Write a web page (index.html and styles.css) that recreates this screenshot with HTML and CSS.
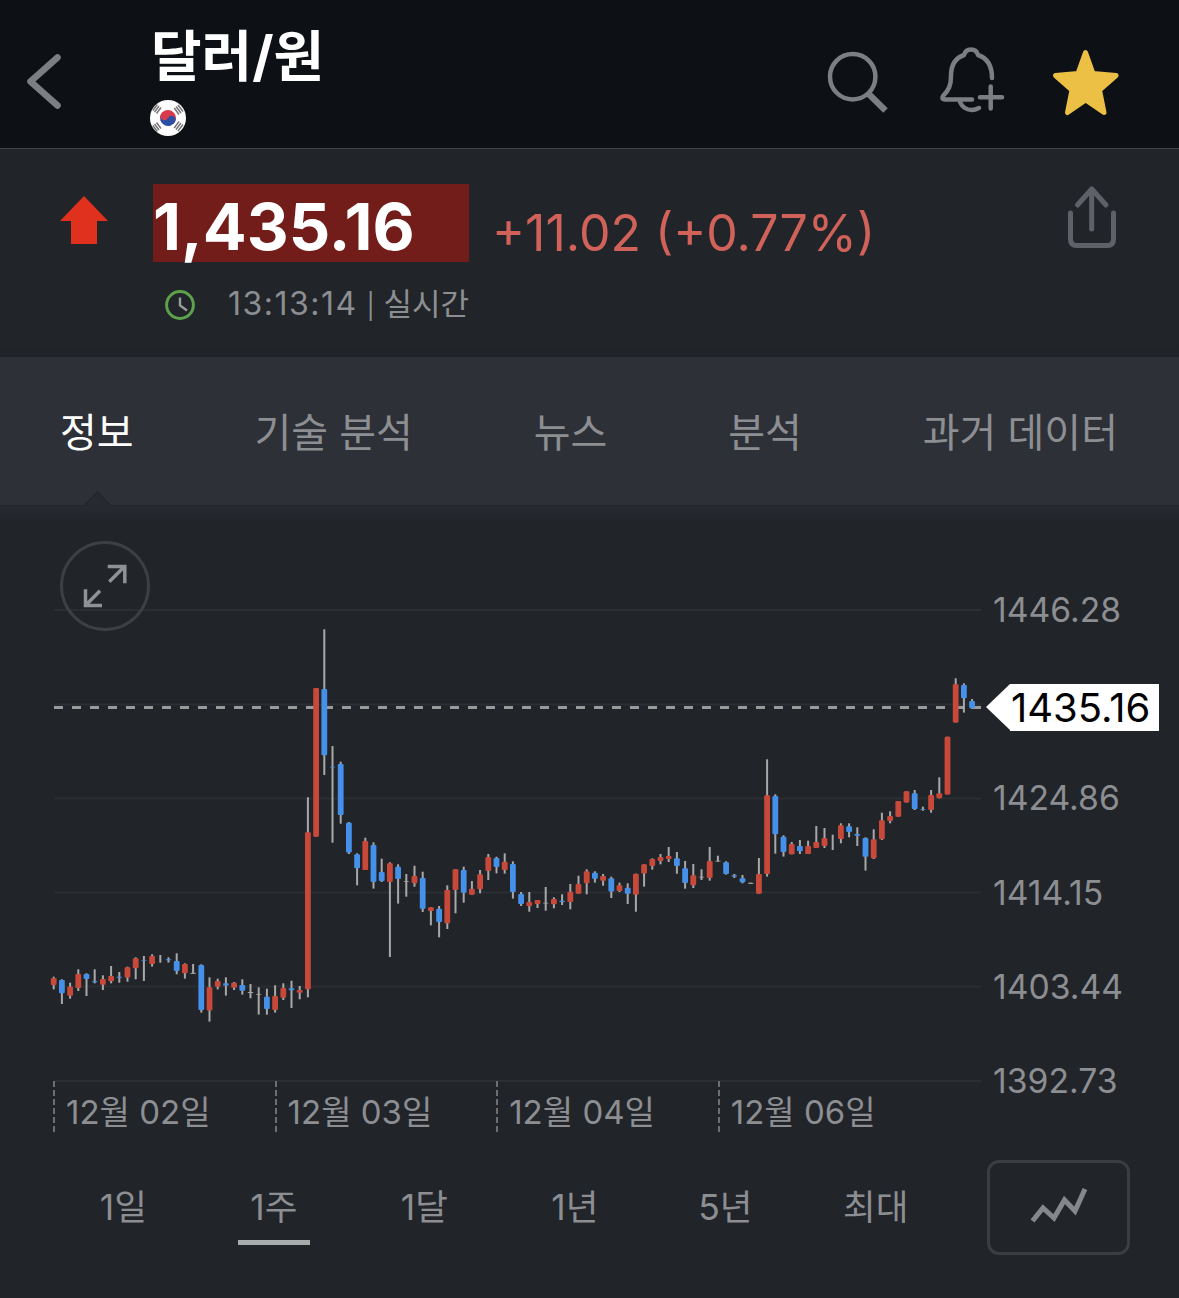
FILE: index.html
```html
<!DOCTYPE html>
<html lang="ko">
<head>
    <meta charset="UTF-8">
    <title>달러/원</title>
    <link rel="stylesheet" href="styles.css">
</head>
<body>
    <header class="top-bar">
        <svg class="back-icon" viewBox="25 50 38 64">
            <path d="M57.500 57.500 30.500 81.500 57.500 105.500" class="icon-line thick"/>
        </svg>
        <div class="title-block">
            <h1>달러/원</h1>
            <svg class="flag" viewBox="0 0 36 36">
                <circle cx="18" cy="18" r="18" fill="#fff"/>
                <g transform="rotate(28 18 18)">
                    <path d="M10 18a8 8 0 0 1 16 0z" fill="#d93a4b"/>
                    <path d="M10 18a8 8 0 0 0 16 0z" fill="#2c4fa3"/>
                    <circle cx="14" cy="18" r="4" fill="#d93a4b"/>
                    <circle cx="22" cy="18" r="4" fill="#2c4fa3"/>
                </g>
                <g stroke="#777" stroke-width="1.500">
                    <path d="M4.500 12 9 6M6.500 13.500 11 7.500M2.800 10.500 7.300 4.500"/>
                    <path d="M26 6.500 31 13M28 5 33 11.500M24.200 8 29 14.500"/>
                    <path d="M4.500 24 9 30M6.500 22.500 11 28.500M2.800 25.500 7.300 31.500"/>
                    <path d="M26 29.500 31 23M28 31 33 24.500M24.200 28 29 21.500"/>
                </g>
            </svg>
        </div>
        <div class="top-actions">
            <svg class="search-icon" viewBox="826 46 64 72">
                <circle cx="852.700" cy="76.700" r="22.700" class="icon-line"/>
                <path d="M868.700 94 885.500 110.500" class="icon-line thick butt"/>
            </svg>
            <svg class="bell-icon" viewBox="938 46 68 72">
                <path d="M992 78C992 66 987 58 978 55 977 51 974 49.500 971 49.500 968 49.500 965 51 964 55 955 58 951 66 951 76 951 85 949 90 943 96 941.500 98 942.500 99.500 945 99.500H972" class="icon-line"/>
                <path d="M960 102C962 107 967 110 972 110 975 110 977 109 979 108" class="icon-line"/>
                <path d="M980 97.300H1002M990.700 86.500V108.500" class="icon-line"/>
            </svg>
            <svg class="star-icon" viewBox="1050 46 72 72">
                <path d="M1085.500 52.500 1093 73.500 1116 75.500 1099.500 90 1104 112.500 1085.700 100 1067.500 112.500 1072 90 1055.500 75.500 1078 73.500z" fill="#ecbf45" stroke="#ecbf45" stroke-width="5" stroke-linejoin="round"/>
            </svg>
        </div>
    </header>

    <section class="quote">
        <svg class="up-arrow" viewBox="0 0 48 48">
            <path d="M24 0 48 25H37V48H11V25H0z" fill="#e0301e"/>
        </svg>
        <div class="quote-main">
            <div class="price-row">
                <div class="price">1,435.16</div>
                <div class="change">+11.02 (+0.77%)</div>
            </div>
            <div class="time-row">
                <svg class="clock-icon" viewBox="0 0 30 30">
                    <circle cx="15" cy="15" r="13.400" fill="none" stroke="#5da24b" stroke-width="3"/>
                    <path d="M15 7.500V15.500L22 20.500" fill="none" stroke="#9a9ca0" stroke-width="2.400"/>
                </svg>
                <span><span class="time-digits">13:13:14</span> <span class="time-sep">|</span> 실시간</span>
            </div>
        </div>
        <svg class="share-icon" viewBox="1066 184 52 66">
            <path d="M1070.500 213V239Q1070.500 245.500 1077 245.500H1107Q1113.500 245.500 1113.500 239V213" class="share-line"/>
            <path d="M1091.700 229V189M1077.500 205 1091.700 189 1106 205" class="share-line"/>
        </svg>
    </section>

    <nav class="tabs">
        <a class="tab active">정보</a>
        <a class="tab">기술 분석</a>
        <a class="tab">뉴스</a>
        <a class="tab">분석</a>
        <a class="tab">과거 데이터</a>
    </nav>

    <section class="chart">
        <svg id="candles" class="chart-plot" viewBox="0 505 1179 650"></svg>
        <div class="expand-btn">
            <svg viewBox="60 541 90 90">
                <path d="M109.300 581.700 124 567M107.700 566.500H124.800V583.300M100 590.700 86 605M85.500 589.300V605.500H102" class="expand-line"/>
            </svg>
        </div>
        <div class="y-axis">
            <span>1446.28</span>
            <span></span>
            <span>1424.86</span>
            <span>1414.15</span>
            <span>1403.44</span>
            <span>1392.73</span>
        </div>
        <div class="x-axis">
            <span>12월 02일</span>
            <span>12월 03일</span>
            <span>12월 04일</span>
            <span>12월 06일</span>
        </div>
        <div class="last-price">1435.16</div>
    </section>

    <section class="ranges">
        <div class="range-list">
            <a class="range-item">1일</a>
            <a class="range-item active">1주</a>
            <a class="range-item">1달</a>
            <a class="range-item">1년</a>
            <a class="range-item">5년</a>
            <a class="range-item">최대</a>
        </div>
        <div class="chart-type">
            <svg viewBox="0 0 60 40">
                <path d="M3.500 36 14 23 25 33 35.500 15 46 26 56 4" fill="none" stroke="#85878b" stroke-width="5"/>
            </svg>
        </div>
    </section>

    <script src="app.js"></script>
</body>
</html>
```

FILE: styles.css
```css
* {
    box-sizing: border-box;
}
body {
    margin: 0;
    width: 1179px;
    height: 1298px;
    overflow: hidden;
    background-color: #212429;
    color: #8c8e92;
    font-family: Inter, "Noto Sans CJK KR", sans-serif;
}
svg {
    display: block;
    flex: none;
}
.icon-line {
    fill: none;
    stroke: #7b7e83;
    stroke-width: 4.500;
    stroke-linecap: round;
    stroke-linejoin: round;
}
.icon-line.thick {
    stroke-width: 6.500;
}
.icon-line.butt {
    stroke-linecap: butt;
}

.top-bar {
    display: flex;
    height: 149px;
    background-color: #0d1015;
    border-bottom: 1px solid #3f4246;
}
.back-icon {
    width: 38px;
    height: 64px;
    margin: 50px 88px 0 25px;
}
.title-block {
    padding-top: 27px;
}
.title-block h1 {
    margin: 0;
    font-size: 55px;
    line-height: 58px;
    font-weight: 700;
    color: #fff;
}
.flag {
    width: 36px;
    height: 36px;
    margin: 15px 0 0 -1px;
}
.top-actions {
    display: flex;
    margin: 46px 57px 0 auto;
}
.search-icon {
    width: 64px;
    height: 72px;
    margin-right: 48px;
}
.bell-icon {
    width: 68px;
    height: 72px;
    margin-right: 44px;
}
.star-icon {
    width: 72px;
    height: 72px;
}

.quote {
    display: flex;
    height: 208px;
    padding: 35px 0 0 60px;
    background: linear-gradient(#212429 195px, #1f2226);
}
.up-arrow {
    width: 48px;
    height: 48px;
    margin: 12px 45px 0 0;
}
.price-row {
    display: flex;
    align-items: flex-start;
}
.price {
    width: 316px;
    height: 78px;
    padding-top: 4px;
    background-color: #721d19;
    color: #fff;
    font-size: 65px;
    line-height: 78px;
    font-weight: 700;
}
.change {
    margin: 19px 0 0 23px;
    color: #d0625a;
    font-size: 50px;
    line-height: 60px;
}
.time-row {
    display: flex;
    align-items: center;
    margin-top: 22px;
    padding-left: 12px;
    font-size: 31px;
    line-height: 38px;
}
.time-digits {
    font-size: 32px;
    letter-spacing: 1.500px;
}
.time-sep {
    font-size: 25px;
}
.clock-icon {
    width: 30px;
    height: 30px;
    margin-right: 33px;
}
.share-icon {
    width: 52px;
    height: 66px;
    margin: 0 61px 0 auto;
}
.share-line {
    fill: none;
    stroke: #5e6268;
    stroke-width: 5;
    stroke-linecap: round;
    stroke-linejoin: round;
}

.tabs {
    position: relative;
    display: flex;
    justify-content: space-between;
    align-items: center;
    height: 148px;
    padding: 0 61px 2px 60px;
    background-color: #2d3037;
    font-size: 40px;
}
.tab.active {
    color: #fff;
}
/* little notch under the active tab */
.tabs::after {
    content: "";
    position: absolute;
    left: 87px;
    top: 138.700px;
    width: 20px;
    height: 20px;
    background-color: #272a31;
    border-left: 1px solid #22252b;
    border-top: 1px solid #22252b;
    transform: rotate(45deg);
}

.chart {
    position: relative;
    height: 650px;
    border-top: 1px solid #24272d;
    background: linear-gradient(#272a31, #212429 16px);
}
.chart-plot {
    position: absolute;
    left: 0;
    top: -1px;
    width: 1179px;
    height: 650px;
}
.expand-btn {
    position: absolute;
    left: 60px;
    top: 35px;
    width: 90px;
    height: 90px;
    border: 3px solid #3c3f44;
    border-radius: 50%;
}
.expand-btn svg {
    width: 90px;
    height: 90px;
    margin: -3px;
}
.expand-line {
    fill: none;
    stroke: #8f9194;
    stroke-width: 3.500;
}
.y-axis {
    position: absolute;
    left: 993px;
    top: 57px;
    display: flex;
    flex-direction: column;
    font-size: 33.700px;
}
.y-axis span {
    height: 94.200px;
    line-height: 94.200px;
}
.x-axis {
    position: absolute;
    left: 53px;
    top: 575px;
    display: flex;
    font-size: 33px;
}
.x-axis span {
    width: 221.600px;
    height: 51px;
    padding: 10px 0 0 11px;
    line-height: 42px;
    border-left: 2px dashed #6d6f73;
}
.last-price {
    position: absolute;
    left: 1010px;
    top: 178px;
    width: 149px;
    height: 47px;
    padding-left: 1px;
    background-color: #fff;
    color: #000;
    font-size: 40px;
    line-height: 47px;
}
.last-price::before {
    content: "";
    position: absolute;
    left: -24px;
    top: 0;
    border-style: solid;
    border-width: 23.500px 24px 23.500px 0;
    border-color: transparent #fff transparent transparent;
}

.ranges {
    display: flex;
    align-items: flex-start;
    height: 143px;
    padding: 5px 0 0 48px;
}
.range-list {
    display: flex;
    width: 903px;
    font-size: 35.500px;
}
.range-item {
    width: 150.500px;
    height: 85px;
    padding-top: 23px;
    line-height: 50px;
    text-align: center;
}
.range-item.active::after {
    content: "";
    display: block;
    width: 72px;
    height: 5px;
    margin: 7px auto 0;
    background-color: #a9abad;
}
.chart-type {
    display: flex;
    align-items: center;
    justify-content: center;
    width: 143px;
    height: 95px;
    margin-left: 36px;
    border: 3px solid #3a3d42;
    border-radius: 12px;
}
.chart-type svg {
    width: 60px;
    height: 40px;
    margin-top: -5px;
}
```

FILE: app.js
```js
// candle rows read off the chart: colour, wick top, wick bottom, body top, body bottom
// y values are in 1/3 px, counted from the base of each block
const blocks = [
  { base: 620, rows: [
    ['r',1070,1108,1075,1095], ['b',1078,1152,1080,1120], ['r',1088,1136,1100,1127], ['r',1048,1113,1062,1104],
    ['b',1060,1128,1062,1077], ['b',1048,1090,1084,1087], ['r',1066,1110,1077,1094], ['r',1038,1090,1068,1084],
    ['b',1056,1088,1070,1073], ['r',1040,1085,1042,1073], ['r',1012,1078,1015,1045], ['b',1008,1083,1020,1022],
    ['r',1003,1040,1008,1032], ['g',1005,1028,0,0], ['b',1012,1028,1018,1021], ['b',1000,1063,1023,1053],
    ['r',1030,1076,1032,1060], ['g',1032,1061,1058,1061], ['b',1033,1178,1035,1170], ['r',1072,1205,1102,1172],
    ['r',1076,1108,1083,1100], ['b',1072,1127,1090,1097], ['r',1086,1110,1088,1103], ['b',1078,1124,1095,1112],
    ['g',1092,1135,1116,1119], ['g',1102,1184,1122,1124], ['b',1106,1184,1130,1167], ['r',1096,1178,1128,1170],
    ['r',1090,1140,1104,1133], ['b',1082,1164,1105,1111], ['r',1098,1138,1110,1118], ['r',532,1132,637,1108],
    ['r',204,650,204,650], ['b',28,465,207,406], ['b',378,668,440,442], ['b',425,611,432,585],
    ['b',606,702,608,697], ['b',700,796,703,745], ['r',653,750,663,750], ['b',667,806,675,786],
    ['b',716,786,756,783], ['r',727,1011,730,786], ['b',733,851,740,777], ['g',762,830,783,785],
    ['r',737,800,768,790], ['b',755,876,774,866], ['r',862,916,862,873], ['b',858,952,866,906],
    ['r',796,927,810,910], ['r',748,880,748,810], ['b',740,848,750,818], ['r',783,824,806,824],
    ['r',750,820,763,808], ['r',702,780,711,753], ['b',710,760,714,741], ['r',700,761,725,750],
    ['b',724,836,732,816], ['b',816,858,822,852], ['r',816,875,846,858], ['r',840,864,840,852],
    ['g',801,872,848,850], ['r',832,865,837,853], ['b',823,855,842,846], ['r',792,868,815,846],
    ['r',767,821,792,821], ['r',748,823,754,790], ['b',754,788,758,776]
  ]},
  { base: 660, rows: [
    ['r',642,677,648,662], ['b',650,714,655,695], ['r',668,696,676,693], ['b',670,732,683,701],
    ['r',641,755,641,704], ['r',613,680,613,641], ['r',595,629,597,618], ['r',582,613,591,603],
    ['r',561,606,588,597], ['b',576,641,595,618], ['b',603,686,625,669], ['r',612,684,646,676],
    ['g',628,660,650,652], ['r',561,662,603,654], ['g',587,605,602,604], ['b',604,644,607,642],
    ['b',642,654,646,650], ['b',645,670,655,667], ['g',668,671,668,671], ['r',594,701,642,701],
    ['r',298,650,406,642], ['b',403,581,408,523], ['b',526,590,530,576], ['r',546,583,552,583],
    ['b',540,582,558,574], ['r',542,582,558,582], ['r',498,564,546,564], ['r',504,564,534,558],
    ['g',524,570,0,0], ['r',490,550,496,537], ['b',490,532,499,516], ['b',502,558,522,527],
    ['b',532,632,534,590], ['r',508,597,538,595], ['r',458,540,481,538], ['r',454,490,468,483],
    ['r',423,470,423,470], ['r',394,428,394,428], ['b',390,450,400,447], ['b',440,452,447,449],
    ['r',390,458,405,450], ['r',352,415,400,415], ['r',230,403,230,403], ['r',55,188,73,188],
    ['b',70,158,75,115], ['b',117,147,123,145]
  ]}
];

const colours = { r: '#c8483a', b: '#4590e8', g: '#a8a8a8' };
const gridYs = [610, 704.5, 798.5, 892.5, 986.5, 1081];
const plot = document.getElementById('candles');
let out = '';

gridYs.forEach(y => {
  out += `<line x1="54" x2="981" y1="${y}" y2="${y}" stroke="#2b2e33" stroke-width="2"/>`;
});
out += '<line x1="54" x2="981" y1="707.5" y2="707.5" stroke="#9a9a9a" stroke-width="3" stroke-dasharray="9 9"/>';

let i = 0;
blocks.forEach(block => {
  block.rows.forEach(([c, wickTop, wickBottom, bodyTop, bodyBottom]) => {
    const x = 53.7 + 8.2 * i;
    const y = v => (block.base + v / 3).toFixed(1);
    out += `<rect x="${(x - 1).toFixed(1)}" y="${y(wickTop)}" width="2" height="${((wickBottom - wickTop) / 3).toFixed(1)}" fill="#a8a8a8"/>`;
    if (bodyBottom > bodyTop) {
      out += `<rect x="${(x - 2.9).toFixed(1)}" y="${y(bodyTop)}" width="5.8" height="${((bodyBottom - bodyTop) / 3).toFixed(1)}" rx="1" fill="${colours[c]}"/>`;
    }
    i++;
  });
});
plot.innerHTML = out;
```
